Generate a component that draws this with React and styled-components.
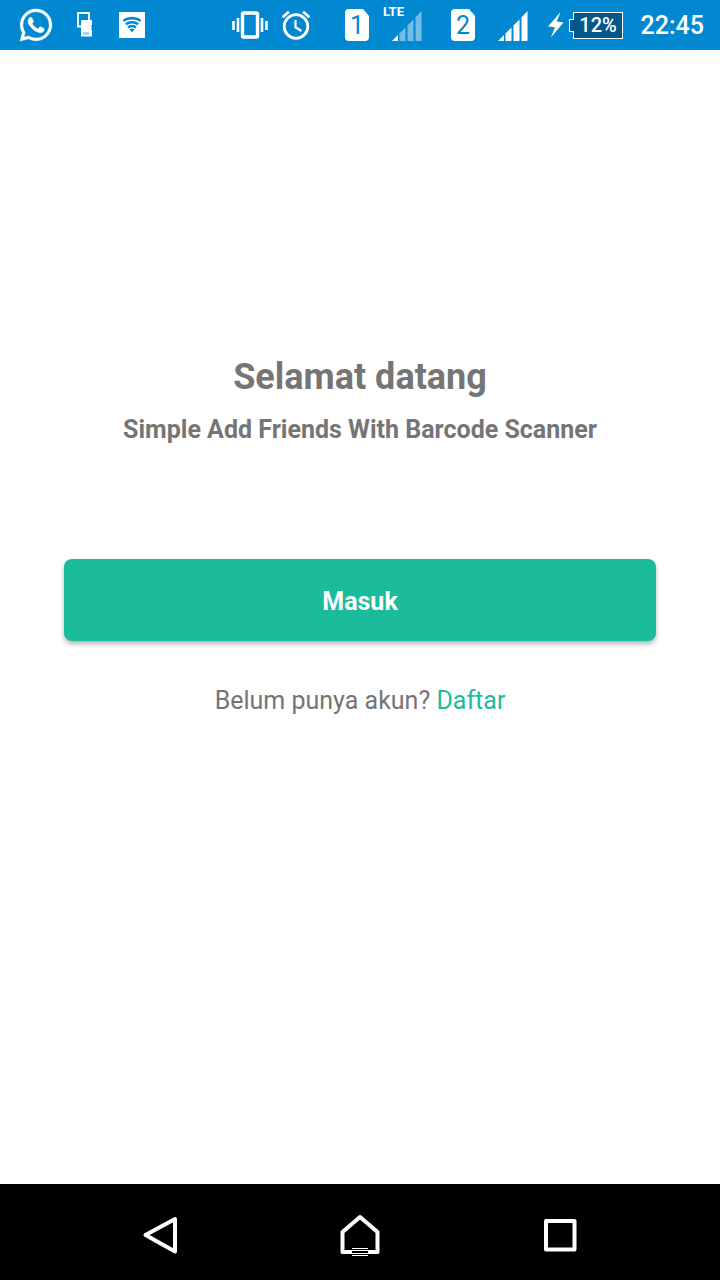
import React from 'react';
import styled, { createGlobalStyle } from 'styled-components';

const colors = {
  status: '#0288d1',
  batteryFill: '#02588a',
  text: '#757575',
  accent: '#1abc9c',
};

const GlobalStyle = createGlobalStyle`
  *, *::before, *::after { box-sizing: border-box; }
  body {
    margin: 0;
    background: #fff;
    font-family: Roboto, "Liberation Sans", sans-serif;
  }
`;

const Screen = styled.div`
  min-height: 100vh;
  display: flex;
  flex-direction: column;
  background: #fff;
`;

const StatusBar = styled.header`
  height: 50px;
  padding: 0 16px 0 20px;
  display: flex;
  align-items: center;
  justify-content: space-between;
  background: ${colors.status};
  color: #fff;
`;

const StatusGroup = styled.div`
  display: flex;
  align-items: center;
  gap: ${({ $gap }) => $gap}px;
  margin-right: ${({ $after = 0 }) => $after}px;
`;

const Glyph = styled.svg`
  display: block;
  flex: none;
  width: ${({ $w }) => $w}px;
  height: ${({ $h }) => $h}px;
  overflow: visible;
`;

const SimSlot = styled.div`
  position: relative;
  width: 77px;
  display: flex;
  align-items: center;
  justify-content: space-between;
  margin-right: ${({ $after }) => $after}px;
`;

const SimCard = styled.span`
  width: 24px;
  height: 32px;
  padding-top: 2px;
  display: flex;
  align-items: center;
  justify-content: center;
  border-radius: 4px;
  background: #fff;
  clip-path: polygon(0 0, 18px 0, 100% 7px, 100% 100%, 0 100%);
  color: ${colors.status};
  font-size: 25px;
  font-weight: 400;
  line-height: 30px;
`;

const NetworkType = styled.span`
  position: absolute;
  top: -3px;
  left: 38px;
  font-size: 13px;
  font-weight: 700;
  line-height: 12px;
`;

const BatteryLevel = styled.span`
  position: relative;
  width: 50px;
  height: 27px;
  margin-left: 4px;
  display: flex;
  align-items: center;
  justify-content: center;
  border: 1px solid #fff;
  background: ${colors.batteryFill};
  font-size: 20px;
  font-weight: 500;
  line-height: 24px;

  &::before {
    content: '';
    position: absolute;
    left: -5px;
    top: 6px;
    width: 5px;
    height: 13px;
    border: 1px solid #fff;
    border-right: 0;
    background: ${colors.batteryFill};
  }
`;

const Clock = styled.time`
  width: 65px;
  padding-top: 2px;
  font-size: 25px;
  line-height: 32px;
  font-weight: 500;
  display: flex;
  justify-content: flex-end;
`;

const Content = styled.main`
  flex: 1;
  padding: 305px 64px 64px;
  display: flex;
  flex-direction: column;
  text-align: center;
  color: ${colors.text};
`;

const Title = styled.h1`
  margin: 0 0 13px;
  font-size: 36px;
  line-height: 44px;
  font-weight: 700;
`;

const Subtitle = styled.p`
  margin: 0 0 111px;
  font-size: 25px;
  line-height: 36px;
  font-weight: 700;
`;

const PrimaryButton = styled.button`
  width: 100%;
  height: 82px;
  margin: 0 0 42px;
  padding: 4px 0 0;
  border: 0;
  border-radius: 8px;
  background: ${colors.accent};
  box-shadow: 0 3px 5px rgba(0, 0, 0, 0.3);
  color: #fff;
  font: 700 25px/36px Roboto, "Liberation Sans", sans-serif;
  cursor: pointer;
`;

const SignUp = styled.p`
  margin: 0;
  font-size: 25px;
  line-height: 36px;
`;

const SignUpLink = styled.a`
  color: ${colors.accent};
  text-decoration: none;
`;

const NavBar = styled.nav`
  height: 96px;
  padding: 6px 60px 0;
  display: grid;
  grid-template-columns: repeat(3, 1fr);
  align-items: center;
  justify-items: center;
  background: #000;
`;

const NavButton = styled.button`
  width: 64px;
  height: 64px;
  padding: 0;
  display: flex;
  align-items: center;
  justify-content: center;
  border: 0;
  background: none;
  color: #fff;
  cursor: pointer;
`;

const WhatsAppIcon = () => (
  <Glyph $w={32} $h={32} viewBox="0 0 24 24" fill="currentColor" aria-hidden="true">
    <path stroke="currentColor" strokeWidth=".4" d="M.06 24l1.69-6.16A11.87 11.87 0 0 1 .16 11.9C.16 5.33 5.5 0 12.05 0a11.82 11.82 0 0 1 8.41 3.49 11.82 11.82 0 0 1 3.48 8.41c0 6.56-5.34 11.9-11.89 11.9a11.9 11.9 0 0 1-5.69-1.45L.06 24zm6.6-3.81c1.67 1 3.27 1.6 5.39 1.6 5.45 0 9.89-4.43 9.89-9.88a9.87 9.87 0 0 0-9.88-9.9c-5.45 0-9.89 4.44-9.89 9.89 0 2.22.65 3.89 1.75 5.63l-1 3.65 3.74-.99z" />
    <path stroke="currentColor" strokeWidth=".5" d="M17.5 14.4c-.3-.15-1.76-.87-2.03-.97-.27-.1-.47-.15-.67.15-.2.3-.77.97-.94 1.16-.18.2-.35.23-.65.08-.3-.15-1.25-.46-2.39-1.48a8.9 8.9 0 0 1-1.65-2.05c-.17-.3-.02-.46.13-.61.13-.13.3-.35.45-.52.15-.18.2-.3.3-.5.1-.2.05-.37-.03-.52-.07-.15-.67-1.61-.91-2.2-.24-.59-.49-.51-.67-.52h-.57c-.2 0-.52.07-.8.37-.27.3-1.03 1.01-1.03 2.48 0 1.46 1.06 2.87 1.21 3.07.15.2 2.1 3.2 5.08 4.49 2.4 1 3 .9 3.52.8.72-.1 1.76-.72 2.01-1.41.25-.7.25-1.29.17-1.42-.07-.12-.27-.2-.53-.4z" />
  </Glyph>
);

const StorageTransferIcon = () => (
  <Glyph $w={19} $h={26} viewBox="0 0 19 26" aria-hidden="true">
    <path d="M13 8V1H2v14M1 14.5h4" fill="none" stroke="#fff" strokeWidth="1.8" />
    <path d="M6 8h10v5l-1 1 1 2-1 1 1 1v6.5H5V9z" fill="#fff" />
    <path d="M8 20v3M10 20v3M12 20v3" stroke={colors.status} strokeWidth="1" opacity=".7" />
  </Glyph>
);

const WifiBadgeIcon = () => (
  <Glyph $w={26} $h={26} viewBox="0 0 26 26" aria-hidden="true">
    <rect width="26" height="26" fill="#fff" />
    <g fill="none" stroke={colors.status} strokeWidth="2.6">
      <path d="M4.4 8.8c4.9-3.6 12.3-3.6 17.2 0" />
      <path d="M6.8 12.2c3.6-2.7 8.8-2.7 12.4 0" />
      <path d="M9 15.4c2.3-1.8 5.7-1.8 8 0" />
    </g>
    <path d="M10.5 17.4q2.5-1.6 5 0L13 20.3z" fill={colors.status} />
  </Glyph>
);

const VibrateIcon = () => (
  <Glyph $w={38} $h={28} viewBox="0 0 38 28" fill="none" stroke="#fff" aria-hidden="true">
    <rect x="11.5" y="2" width="15" height="24" rx="1" strokeWidth="3.4" />
    <path d="M7 7v14M31 7v14" strokeWidth="2.6" />
    <path d="M2.5 10v9M35.5 10v9" strokeWidth="2.6" />
  </Glyph>
);

const AlarmIcon = () => (
  <Glyph $w={30} $h={30} viewBox="0 0 30 30" fill="none" stroke="#fff" aria-hidden="true">
    <circle cx="15" cy="16.5" r="11.8" strokeWidth="2.8" />
    <path d="M14.5 10v7.3l6 3.7" strokeWidth="2.2" />
    <path d="M1.6 7.2l6.3-5.4M28.4 7.2l-6.3-5.4" strokeWidth="2.8" />
  </Glyph>
);

const SignalIcon = ({ weak = false }) => (
  <Glyph $w={30} $h={30} viewBox="0 0 30 30" fill="#fff" aria-hidden="true">
    <path d="M0 31l6-6v6z" />
    <g opacity={weak ? 0.45 : 1}>
      <path d="M7.5 31v-7.5l6-6V31z" />
      <path d="M15.5 31V15.5l6-6V31z" />
      <path d="M23.5 31V7.5L29.5 1v30z" />
    </g>
  </Glyph>
);

const BoltIcon = () => (
  <Glyph $w={16} $h={26} viewBox="0 0 16 26" fill="#fff" aria-hidden="true">
    <path d="M12.6 0L0 14.6l7 .6L2.8 25.5 15.6 10.4 8.7 9.6z" />
  </Glyph>
);

const BackIcon = () => (
  <Glyph $w={36} $h={40} viewBox="0 0 36 40" fill="none" stroke="#fff" aria-hidden="true">
    <path d="M33 4v32.5L3.5 20z" strokeWidth="4" strokeLinejoin="round" />
  </Glyph>
);

const HomeIcon = () => (
  <Glyph $w={40} $h={44} viewBox="0 0 40 44" fill="none" stroke="#fff" aria-hidden="true">
    <path d="M2.5 39V19L20 4l17.5 15v20z" strokeWidth="4" strokeLinejoin="round" />
    <path d="M12 34h16v9H12z" fill="#000" stroke="none" />
    <path d="M12 35.5h16M12 42.5h16" strokeWidth="1" />
    <path d="M12 37.5h16M12 40.5h16" strokeWidth="1" />
  </Glyph>
);

const RecentsIcon = () => (
  <Glyph $w={34} $h={34} viewBox="0 0 34 34" fill="none" stroke="#fff" aria-hidden="true">
    <rect x="3" y="3" width="28.5" height="28.5" strokeWidth="4" strokeLinejoin="round" />
  </Glyph>
);

export default function App() {
  return (
    <Screen>
      <GlobalStyle />
      <StatusBar>
        <StatusGroup $gap={24}>
          <WhatsAppIcon />
          <StorageTransferIcon />
          <WifiBadgeIcon />
        </StatusGroup>
        <StatusGroup $gap={16}>
          <StatusGroup $gap={12} $after={18}>
            <VibrateIcon />
            <AlarmIcon />
          </StatusGroup>
          <SimSlot $after={13}>
            <SimCard>1</SimCard>
            <NetworkType>LTE</NetworkType>
            <SignalIcon weak />
          </SimSlot>
          <SimSlot $after={4}>
            <SimCard>2</SimCard>
            <SignalIcon />
          </SimSlot>
          <StatusGroup $gap={5}>
            <BoltIcon />
            <BatteryLevel>12%</BatteryLevel>
          </StatusGroup>
          <Clock>22:45</Clock>
        </StatusGroup>
      </StatusBar>
      <Content>
        <Title>Selamat datang</Title>
        <Subtitle>Simple Add Friends With Barcode Scanner</Subtitle>
        <PrimaryButton type="button">Masuk</PrimaryButton>
        <SignUp>
          Belum punya akun? <SignUpLink href="#daftar">Daftar</SignUpLink>
        </SignUp>
      </Content>
      <NavBar aria-label="System">
        <NavButton type="button" aria-label="Back"><BackIcon /></NavButton>
        <NavButton type="button" aria-label="Home"><HomeIcon /></NavButton>
        <NavButton type="button" aria-label="Recent apps"><RecentsIcon /></NavButton>
      </NavBar>
    </Screen>
  );
}
